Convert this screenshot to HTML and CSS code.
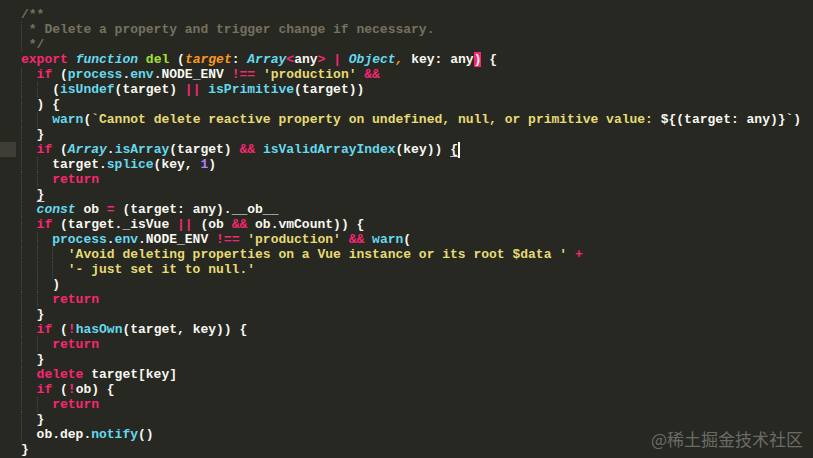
FILE: index.html
```html
<!DOCTYPE html>
<html lang="en">
<head>
    <meta charset="UTF-8">
    <title>del.js</title>
    <link rel="stylesheet" href="styles.css">
</head>
<body>
    <div class="editor">
        <div class="ln"><span class="gut"></span><code><span class="c">/**</span></code></div>
        <div class="ln"><span class="gut"></span><code><span class="g1"></span><span class="c">* Delete a property and trigger change if necessary.</span></code></div>
        <div class="ln"><span class="gut"></span><code><span class="g1"></span><span class="c">*/</span></code></div>
        <div class="ln"><span class="gut"></span><code><span class="k">export</span> <span class="t">function</span> <span class="f">del</span> (<span class="p">target</span>: <span class="t">Array</span><span class="k">&lt;</span>any<span class="k">&gt;</span> <span class="k">|</span> <span class="t">Object</span><span class="p">,</span> key: any<span class="match">)</span> {</code></div>
        <div class="ln"><span class="gut"></span><code><span class="g"></span><span class="k">if</span> (<span class="b">process</span>.<span class="b">env</span>.NODE_ENV <span class="k">!==</span> <span class="s">'production'</span> <span class="k">&amp;&amp;</span></code></div>
        <div class="ln"><span class="gut"></span><code><span class="g"></span><span class="g"></span>(<span class="b">isUndef</span>(target) <span class="k">||</span> <span class="b">isPrimitive</span>(target))</code></div>
        <div class="ln"><span class="gut"></span><code><span class="g"></span>) {</code></div>
        <div class="ln"><span class="gut"></span><code><span class="g"></span><span class="g"></span><span class="b">warn</span>(<span class="s">`Cannot delete reactive property on undefined, null, or primitive value: </span>${(target: any)}`)</code></div>
        <div class="ln"><span class="gut"></span><code><span class="g"></span>}</code></div>
        <div class="ln"><span class="gut active"></span><code><span class="g"></span><span class="k">if</span> (<span class="t">Array</span>.<span class="b">isArray</span>(target) <span class="k">&amp;&amp;</span> <span class="b">isValidArrayIndex</span>(key)) <span class="ul">{</span><span class="cursor"></span></code></div>
        <div class="ln"><span class="gut"></span><code><span class="g"></span><span class="g"></span>target.<span class="b">splice</span>(key, <span class="n">1</span>)</code></div>
        <div class="ln"><span class="gut"></span><code><span class="g"></span><span class="g"></span><span class="k">return</span></code></div>
        <div class="ln"><span class="gut"></span><code><span class="g"></span><span class="ul">}</span></code></div>
        <div class="ln"><span class="gut"></span><code><span class="g"></span><span class="t">const</span> ob <span class="k">=</span> (target: any).__ob__</code></div>
        <div class="ln"><span class="gut"></span><code><span class="g"></span><span class="k">if</span> (target._isVue <span class="k">||</span> (ob <span class="k">&amp;&amp;</span> ob.vmCount)) {</code></div>
        <div class="ln"><span class="gut"></span><code><span class="g"></span><span class="g"></span><span class="b">process</span>.<span class="b">env</span>.NODE_ENV <span class="k">!==</span> <span class="s">'production'</span> <span class="k">&amp;&amp;</span> <span class="b">warn</span>(</code></div>
        <div class="ln"><span class="gut"></span><code><span class="g"></span><span class="g"></span><span class="g"></span><span class="s">'Avoid deleting properties on a Vue instance or its root $data '</span> <span class="k">+</span></code></div>
        <div class="ln"><span class="gut"></span><code><span class="g"></span><span class="g"></span><span class="g"></span><span class="s">'- just set it to null.'</span></code></div>
        <div class="ln"><span class="gut"></span><code><span class="g"></span><span class="g"></span>)</code></div>
        <div class="ln"><span class="gut"></span><code><span class="g"></span><span class="g"></span><span class="k">return</span></code></div>
        <div class="ln"><span class="gut"></span><code><span class="g"></span>}</code></div>
        <div class="ln"><span class="gut"></span><code><span class="g"></span><span class="k">if</span> (<span class="k">!</span><span class="b">hasOwn</span>(target, key)) {</code></div>
        <div class="ln"><span class="gut"></span><code><span class="g"></span><span class="g"></span><span class="k">return</span></code></div>
        <div class="ln"><span class="gut"></span><code><span class="g"></span>}</code></div>
        <div class="ln"><span class="gut"></span><code><span class="g"></span><span class="k">delete</span> target[key]</code></div>
        <div class="ln"><span class="gut"></span><code><span class="g"></span><span class="k">if</span> (<span class="k">!</span>ob) {</code></div>
        <div class="ln"><span class="gut"></span><code><span class="g"></span><span class="g"></span><span class="k">return</span></code></div>
        <div class="ln"><span class="gut"></span><code><span class="g"></span>}</code></div>
        <div class="ln"><span class="gut"></span><code><span class="g"></span>ob.dep.<span class="b">notify</span>()</code></div>
        <div class="ln"><span class="gut"></span><code>}</code></div>
    </div>
    <div class="watermark">@稀土掘金技术社区</div>
</body>
</html>
```

FILE: styles.css
```css
html, body {
    margin: 0;
    padding: 0;
    height: 100%;
    background-color: #272822;
    overflow: hidden;
}

.editor {
    padding-top: 7px;
    font-family: "Liberation Mono", "Courier New", monospace;
    font-size: 13px;
    font-weight: bold;
    color: #f8f8f2;
}

.ln {
    display: flex;
    height: 15px;
    line-height: 15px;
}

.gut {
    width: 16px;
    flex-shrink: 0;
    margin-right: 5px;
}

.gut.active {
    background-color: #3e3d36;
}

code {
    font: inherit;
    white-space: pre;
}

/* indent guides */
.g, .g1 {
    display: inline-block;
    width: 15.6px;
    height: 15px;
    vertical-align: top;
    box-sizing: border-box;
    border-left: 1px dotted #4b4b44;
}

.g1 {
    width: 7.8px;
}

/* syntax colours (monokai) */
.c { color: #75715e; }
.k { color: #f92672; }
.t { color: #66d9ef; font-style: italic; }
.b { color: #66d9ef; }
.f { color: #a6e22e; }
.p { color: #fd971f; font-style: italic; }
.s { color: #e6db74; }
.n { color: #ae81ff; }

.match {
    background-color: #f92672;
    color: #f8f8f2;
}

.ul {
    text-decoration: underline;
    text-decoration-color: #c9c4f0;
    text-underline-offset: 3px;
}

.cursor {
    display: inline-block;
    width: 2px;
    height: 16px;
    vertical-align: top;
    background-color: #f8f8f0;
}

.watermark {
    position: absolute;
    right: 10px;
    bottom: 7px;
    font-family: "Noto Sans CJK SC", sans-serif;
    font-size: 17px;
    color: rgba(255, 255, 255, 0.32);
}
```
